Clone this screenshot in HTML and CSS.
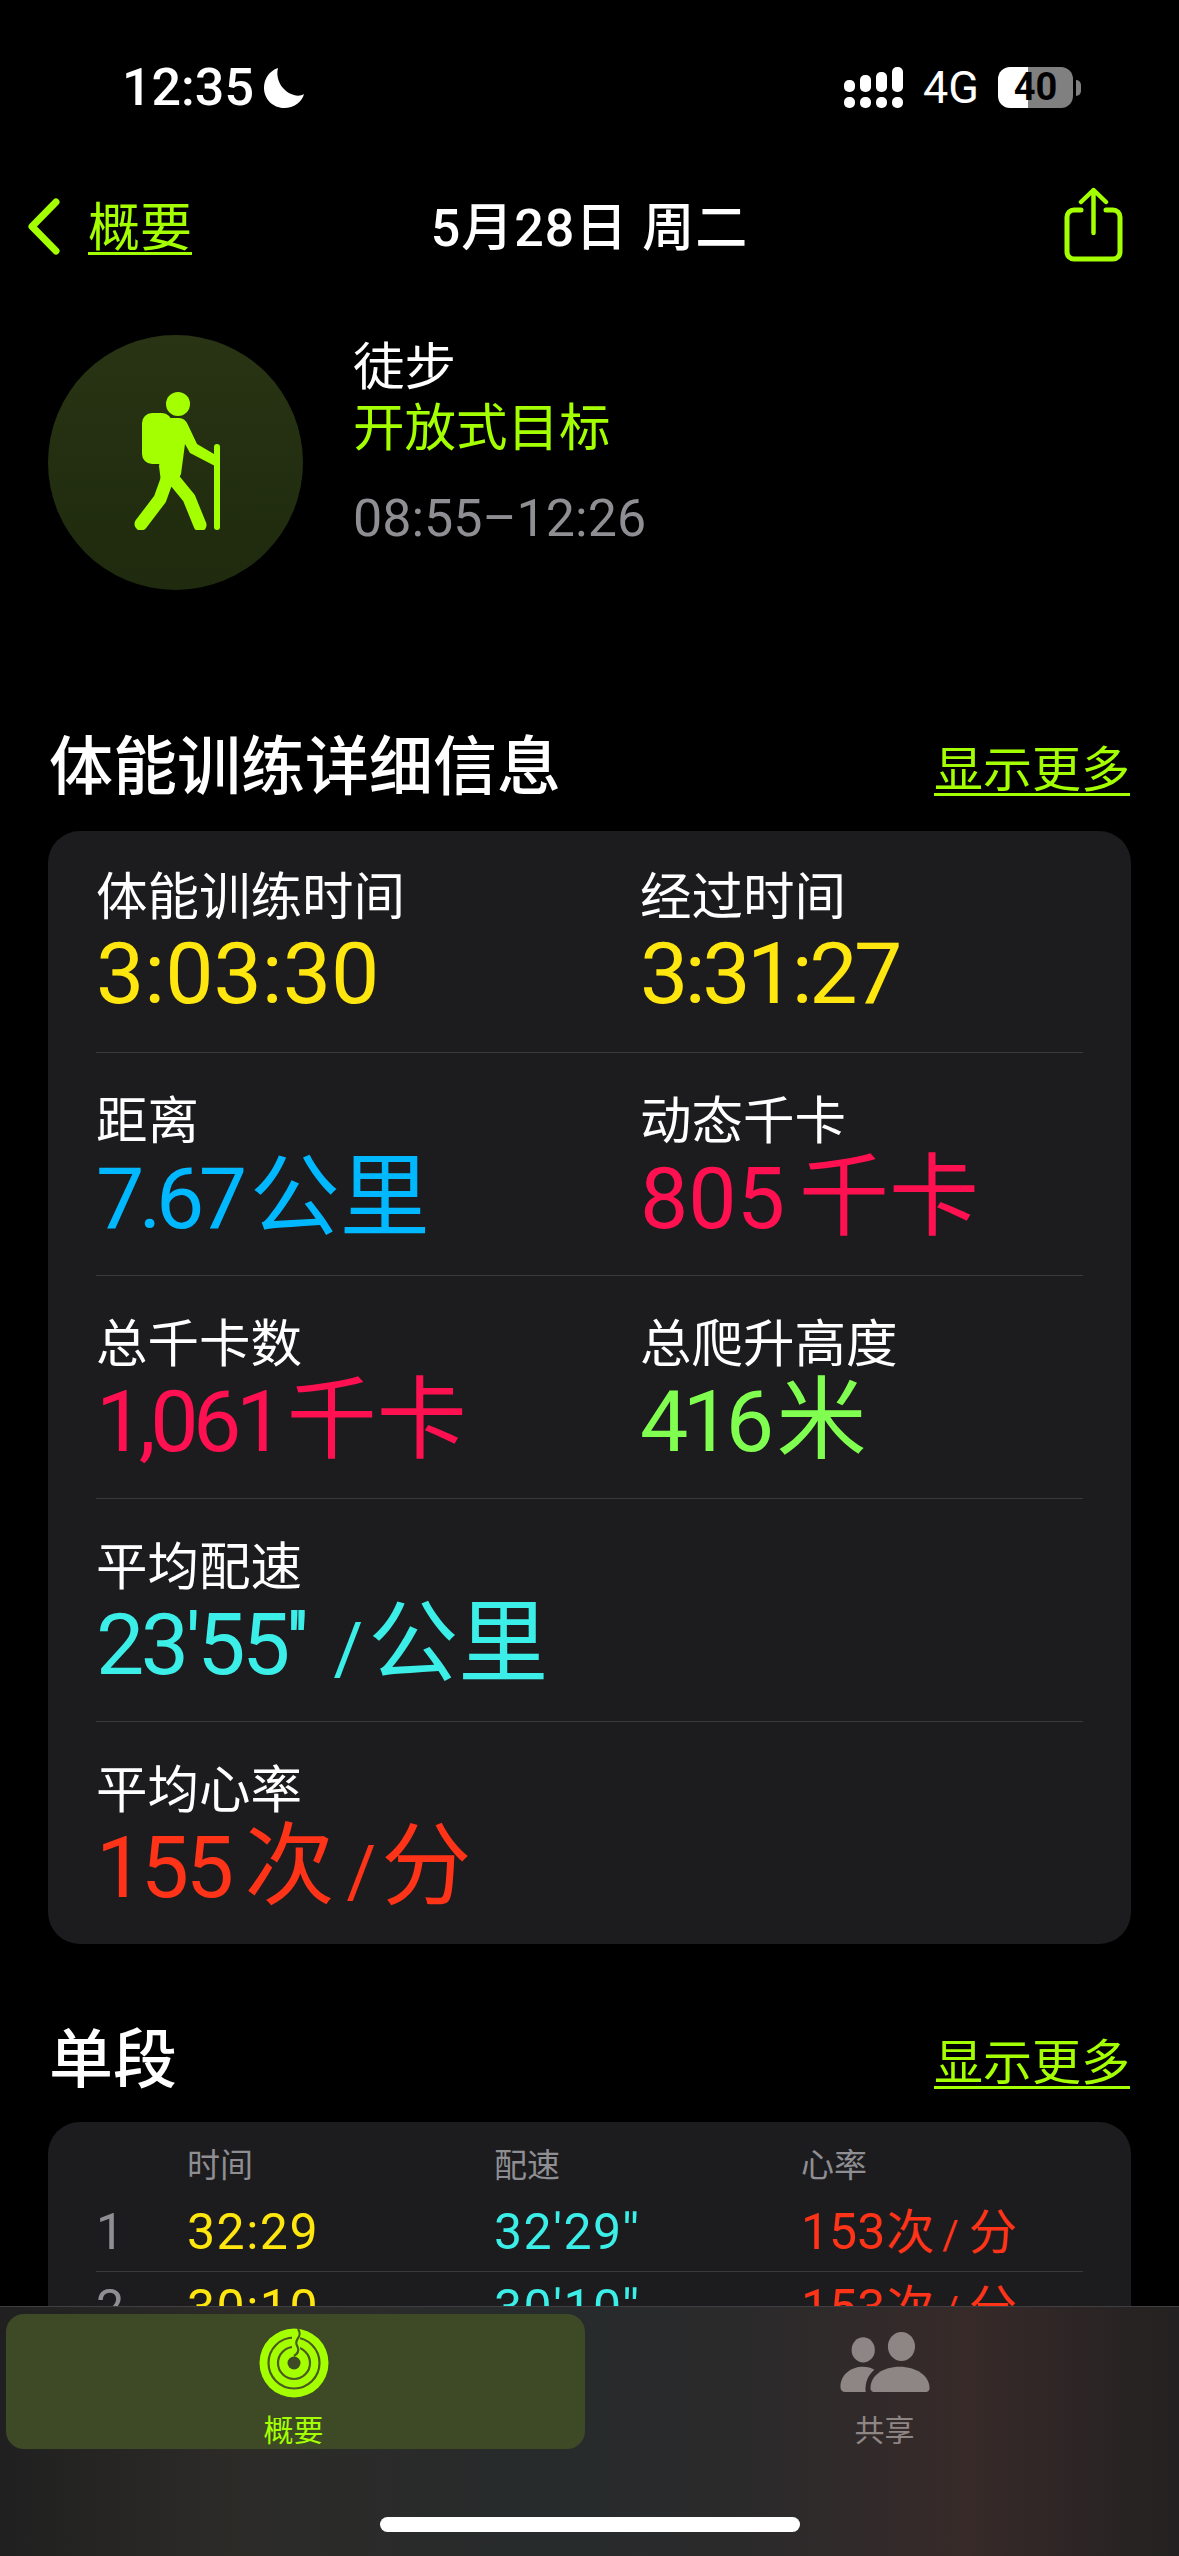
FILE: index.html
```html
<!DOCTYPE html>
<html lang="zh">

<head>
  <meta charset="utf-8">
  <title>体能训练</title>
  <link rel="stylesheet" href="styles.css">
</head>

<body>
  <div class="page">
    <div class="status">
      <div class="status-left">
        <span class="clock">12:35</span>
        <svg class="moon" viewBox="0 0 40 40">
          <path d="M14 0C5 3 0 11 0 20c0 11 9 20 20 20 10 0 18-6 20-14-3 2-7 2-10 1C19 24 11 12 14 0z" fill="#fff" />
        </svg>
      </div>
      <div class="status-right">
        <div class="signal">
          <div class="signal-col"><i class="s1"></i><i></i></div>
          <div class="signal-col"><i class="s2"></i><i></i></div>
          <div class="signal-col"><i class="s3"></i><i></i></div>
          <div class="signal-col"><i class="s4"></i><i></i></div>
        </div>
        <span class="network">4G</span>
        <div class="battery"><span>40</span></div>
        <div class="battery-nub"></div>
      </div>
    </div>

    <div class="nav">
      <div class="nav-back">
        <svg class="chevron" viewBox="0 0 33 57">
          <path d="M29 4L5 28.5 29 53" fill="none" stroke="#a4ff00" stroke-width="7" stroke-linecap="round" stroke-linejoin="round" />
        </svg>
        <a class="link">概要</a>
      </div>
      <div class="nav-title">5月28日 周二</div>
      <svg class="share" viewBox="0 0 59 75">
        <path d="M17 23H10a7 7 0 0 0-7 7v35a7 7 0 0 0 7 7h39a7 7 0 0 0 7-7V30a7 7 0 0 0-7-7h-7" fill="none" stroke="#a4ff00" stroke-width="5" stroke-linecap="round" />
        <path d="M29.5 46V3M17 15L29.500 3 42 15" fill="none" stroke="#a4ff00" stroke-width="4.500" stroke-linecap="round" stroke-linejoin="round" />
      </svg>
    </div>

    <div class="hero">
      <div class="hero-badge">
        <svg class="hiker" viewBox="0 0 90 138">
          <ellipse cx="45" cy="12" rx="12" ry="12" fill="#a4ff00" />
          <rect x="9" y="21" width="30" height="51" rx="10" fill="#a4ff00" />
          <path d="M34 26H46Q52 26 55 33L64 52 86 65 82 74 57 61 52 52 48 82 44 90H28L26 74z" fill="#a4ff00" />
          <path d="M36 82L27 107 8 132M38 84L56 106 67 133" fill="none" stroke="#a4ff00" stroke-width="13" stroke-linecap="round" stroke-linejoin="round" />
          <rect x="81" y="52" width="6" height="86" rx="3" fill="#a4ff00" />
        </svg>
      </div>
      <div class="hero-text">
        <div class="hero-name">徒步</div>
        <div class="hero-goal">开放式目标</div>
        <div class="hero-time">08:55–12:26</div>
      </div>
    </div>

    <div class="section-head first">
      <h2>体能训练详细信息</h2>
      <a class="link small">显示更多</a>
    </div>
    <div class="card">
      <div class="metric-row">
        <div class="metric">
          <div class="metric-label">体能训练时间</div>
          <div class="metric-value yellow">3:03:30</div>
        </div>
        <div class="metric">
          <div class="metric-label">经过时间</div>
          <div class="metric-value yellow"><span class="tight-pace">3:31:27</span></div>
        </div>
      </div>
      <div class="metric-row">
        <div class="metric">
          <div class="metric-label">距离</div>
          <div class="metric-value blue"><span class="tight">7.67</span><span class="unit">公里</span></div>
        </div>
        <div class="metric">
          <div class="metric-label">动态千卡</div>
          <div class="metric-value pink">805<span class="unit">千卡</span></div>
        </div>
      </div>
      <div class="metric-row">
        <div class="metric">
          <div class="metric-label">总千卡数</div>
          <div class="metric-value pink"><span class="tight">1,061</span><span class="unit">千卡</span></div>
        </div>
        <div class="metric">
          <div class="metric-label">总爬升高度</div>
          <div class="metric-value green"><span class="tight">416</span><span class="unit">米</span></div>
        </div>
      </div>
      <div class="metric-row">
        <div class="metric">
          <div class="metric-label">平均配速</div>
          <div class="metric-value cyan"><span class="tight-pace">23'55''</span><span class="slash wide">/</span><span class="unit">公里</span></div>
        </div>
      </div>
      <div class="metric-row">
        <div class="metric">
          <div class="metric-label">平均心率</div>
          <div class="metric-value red"><span class="tight-pace">155</span><span class="unit">次</span><span class="slash">/</span><span class="unit">分</span></div>
        </div>
      </div>
    </div>

    <div class="section-head second">
      <h2>单段</h2>
      <a class="link small">显示更多</a>
    </div>
    <div class="card splits">
      <div class="split-head">
        <span></span>
        <span>时间</span>
        <span>配速</span>
        <span>心率</span>
      </div>
      <div class="split-row">
        <span class="split-no">1</span>
        <span class="yellow">32:29</span>
        <span class="cyan">32'29''</span>
        <span class="red">153<span class="unit">次</span><span class="slash">/</span><span class="unit">分</span></span>
      </div>
      <div class="split-row">
        <span class="split-no">2</span>
        <span class="yellow">30:10</span>
        <span class="cyan">30'10''</span>
        <span class="red">153<span class="unit">次</span><span class="slash">/</span><span class="unit">分</span></span>
      </div>
    </div>

    <div class="tabbar">
      <div class="tabs">
        <div class="tab active">
          <svg class="rings" viewBox="0 0 70 70">
            <circle cx="35" cy="35" r="34.500" fill="#a4ff00" />
            <circle cx="35" cy="35" r="25.500" fill="none" stroke="#4a5a20" stroke-width="2.200" />
            <circle cx="35" cy="35" r="16" fill="none" stroke="#4a5a20" stroke-width="2.200" />
            <path d="M33 8h8v17h-8z" fill="#a4ff00" />
            <path d="M39 1C42 5 41 8 38 12 36 15 38 17 39 20 40 23 38 26 35 28" fill="none" stroke="#4a5a20" stroke-width="2.200" />
            <circle cx="35" cy="35" r="6.500" fill="#3e4a26" />
          </svg>
          <span>概要</span>
        </div>
        <div class="tab">
          <svg class="people" viewBox="0 0 94 62">
            <ellipse cx="24.500" cy="18.500" rx="12" ry="13" fill="#8e8685" />
            <ellipse cx="64" cy="15" rx="14" ry="15" fill="#8e8685" />
            <path d="M1 57C1 44 12 36 24 36c5 0 9 1 12 3-6 5-10 13-9 23H6c-3 0-5-2-5-5z" fill="#8e8685" />
            <path d="M32 58c0-13 13-22 30-22s31 9 31 22c0 3-2 4-5 4H37c-3 0-5-1-5-4z" fill="#8e8685" />
          </svg>
          <span>共享</span>
        </div>
      </div>
      <div class="home-bar"></div>
    </div>
  </div>
</body>

</html>
```

FILE: styles.css
```css
* {
  box-sizing: border-box;
}

body {
  margin: 0;
  background: #000;
  font-family: Roboto, 'Noto Sans CJK SC', sans-serif;
  color: #fff;
}

.page {
  position: relative;
  width: 1179px;
  height: 2556px;
  overflow: hidden;
  background: #000;
}

.status {
  height: 160px;
  padding: 67px 98px 0 122px;
  display: flex;
  justify-content: space-between;
  align-items: flex-start;
}

.status-left {
  display: flex;
  align-items: center;
  height: 41px;
}

.clock {
  font-size: 52px;
  font-weight: 500;
  line-height: 41px;
}

.moon {
  width: 40px;
  height: 40px;
  margin-left: 10px;
}

.status-right {
  display: flex;
  align-items: center;
  height: 41px;
}

.signal {
  display: flex;
  gap: 5px;
  align-items: flex-end;
}

.signal-col {
  display: flex;
  flex-direction: column;
  gap: 5px;
  width: 11px;
}

.signal-col i {
  display: block;
  height: 11px;
  background: #fff;
  border-radius: 5px;
}

.signal-col .s1 { height: 12px; }
.signal-col .s2 { height: 17px; }
.signal-col .s3 { height: 20px; }
.signal-col .s4 { height: 25px; }

.network {
  margin-left: 20px;
  font-size: 45px;
  line-height: 41px;
  width: 75px;
}

.battery {
  width: 75px;
  height: 41px;
  border-radius: 12px;
  background: linear-gradient(90deg, #fff 40%, #808080 40%);
  color: #000;
  font-size: 38px;
  font-weight: 700;
  line-height: 41px;
  text-align: center;
}

.battery-nub {
  width: 5px;
  height: 16px;
  margin-left: 3px;
  background: #808080;
  border-radius: 0 8px 8px 0;
}

.nav {
  height: 132px;
  padding: 0 27px;
  display: grid;
  grid-template-columns: 1fr auto 1fr;
  align-items: center;
}

.nav-back {
  display: flex;
  align-items: center;
  gap: 28px;
}

.chevron {
  width: 33px;
  height: 57px;
}

.link {
  color: #a4ff00;
  font-size: 52px;
  line-height: 60px;
  text-decoration: underline;
  text-decoration-thickness: 3px;
  text-underline-offset: 6px;
}

.nav-back .link {
  margin-top: 5px;
}

.link.small {
  font-size: 49px;
}

.nav-title {
  font-size: 52px;
  font-weight: 500;
  letter-spacing: 1px;
  margin-top: -5px;
}

.share {
  width: 59px;
  height: 75px;
  margin: -4px 29px 0 0;
  justify-self: end;
}

.hero {
  display: flex;
  margin: 43px 0 0 48px;
  gap: 50px;
  height: 255px;
}

.hero-badge {
  width: 255px;
  height: 255px;
  border-radius: 50%;
  background: linear-gradient(#283413, #1f2a0e);
  display: flex;
  align-items: center;
  justify-content: center;
  padding-left: 5px;
}

.hiker {
  width: 90px;
  height: 138px;
  margin-top: -3px;
}

.hero-text {
  padding-top: 3px;
}

.hero-name {
  font-size: 51.500px;
  line-height: 60px;
}

.hero-goal {
  font-size: 51.500px;
  line-height: 62px;
  color: #a4ff00;
}

.hero-time {
  margin-top: 29px;
  font-size: 52px;
  line-height: 60px;
  color: #8e8e93;
}

.section-head {
  height: 100px;
  padding: 0 49px 0 49px;
  display: flex;
  justify-content: space-between;
  align-items: center;
}

.section-head.first {
  margin: 124px 0 17px;
}

.section-head.second {
  margin: 63px 0 15px;
}

.section-head h2 {
  margin: 0 0 6px;
  font-size: 64px;
  font-weight: 500;
}

.section-head .link {
  margin-top: 14px;
}

.card {
  margin: 0 48px;
  padding: 0 48px;
  background: #1c1c1e;
  border-radius: 32px;
}

.metric-row {
  height: 223px;
  padding-top: 39px;
  display: grid;
  grid-template-columns: 544px 1fr;
  border-bottom: 1px solid #3a3a3c;
}

.metric-row:first-child {
  height: 222px;
  padding-top: 37px;
}

.metric-row:last-child {
  height: 222px;
  border-bottom: none;
}

.metric-label {
  font-size: 51.500px;
  line-height: 60px;
}

.metric-value {
  margin-top: 1px;
  font-size: 86px;
  line-height: 90px;
  height: 90px;
  white-space: nowrap;
}

.tight {
  letter-spacing: -5.500px;
  margin-right: -6px;
}

.tight-pace {
  letter-spacing: -3.500px;
}

.unit {
  margin-left: 14px;
  font-size: 90px;
  line-height: 1;
}

.slash {
  margin-left: 12px;
  font-size: 72px;
  line-height: 1;
}

.slash.wide {
  margin-left: 28px;
}

.slash + .unit {
  margin-left: 5px;
}

.yellow { color: #ffe60f; }
.blue { color: #00b8ff; }
.pink { color: #ff1050; }
.green { color: #80ff50; }
.cyan { color: #3ceee8; }
.red { color: #ff3318; }

.splits {
  height: 400px;
}

.split-head,
.split-row {
  display: grid;
  grid-template-columns: 91px 307px 307px 1fr;
}

.split-head {
  padding-top: 20px;
  height: 74px;
  font-size: 33px;
  line-height: 48px;
  color: #8e8e93;
}

.split-row {
  height: 76px;
  font-size: 50px;
  letter-spacing: 1.500px;
  line-height: 72px;
  border-bottom: 1px solid #3a3a3c;
  white-space: nowrap;
}

.split-row .split-no {
  color: #8e8e93;
}

.split-row .red {
  letter-spacing: 0;
}

.split-row .unit {
  margin-left: 1px;
  font-size: 48px;
}

.split-row .slash {
  margin-left: 8px;
  font-size: 40px;
}

.split-row .slash + .unit {
  margin-left: 10px;
}

.tabbar {
  position: absolute;
  left: 0;
  right: 0;
  bottom: 0;
  height: 250px;
  padding: 7px 6px 0;
  border-top: 1px solid #3f3f41;
  background: linear-gradient(90deg, #202020 0%, #2c2b28 20%, #272b2c 48%, #2c2a2b 65%, #372a29 82%, #232121 100%);
}

.tabs {
  display: flex;
}

.tab {
  flex: none;
  width: 599px;
  height: 135px;
  display: flex;
  flex-direction: column;
  align-items: center;
  font-size: 30px;
  color: #8e8685;
  border-radius: 18px;
}

.tab.active {
  width: 579px;
  padding: 14px 4px 0 0;
  background: #3e4a26;
  color: #a4ff00;
}

.tab span {
  line-height: 36px;
}

.tab.active span {
  margin-top: 15px;
}

.tab:not(.active) span {
  margin-top: 21px;
}

.rings {
  width: 70px;
  height: 70px;
}

.people {
  width: 94px;
  height: 62px;
  margin-top: 18px;
}

.home-bar {
  position: absolute;
  left: 380px;
  bottom: 24px;
  width: 420px;
  height: 15px;
  border-radius: 8px;
  background: #fff;
}
```
